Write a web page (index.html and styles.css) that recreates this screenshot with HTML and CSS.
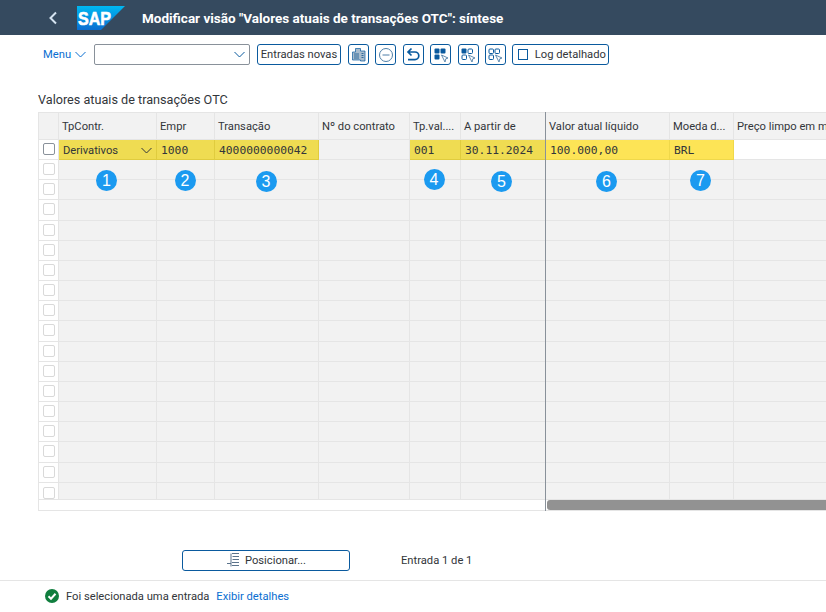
FILE: index.html
```html
<!DOCTYPE html>
<html lang="pt">
<head>
    <meta charset="UTF-8">
    <title>Modificar visão</title>
    <link rel="stylesheet" href="styles.css">
</head>
<body>

<header class="shell">
    <svg class="back" width="10" height="14" viewBox="0 0 10 14"><path d="M8 1.500 2.500 7 8 12.500" fill="none" stroke="#d5e3f0" stroke-width="2"/></svg>
    <svg class="logo" width="48" height="24" viewBox="0 0 48 24">
        <defs><linearGradient id="sapBlue" x1="0" y1="0" x2="0" y2="1"><stop offset="0" stop-color="#00b8f1"/><stop offset="1" stop-color="#0a6ed1"/></linearGradient></defs>
        <path d="M0 0H48L24 24H0Z" fill="url(#sapBlue)"/>
        <text x="1" y="18.500" class="logo-text" textLength="33" lengthAdjust="spacingAndGlyphs">SAP</text>
    </svg>
    <h1>Modificar visão "Valores atuais de transações OTC": síntese</h1>
</header>

<div class="toolbar">
    <span class="menu">Menu
        <svg width="11" height="7" viewBox="0 0 11 7"><path d="M.5 1 5.500 6l5-5" fill="none" stroke="#0a6ed1"/></svg>
    </span>
    <div class="combo">
        <svg width="11" height="7" viewBox="0 0 11 7"><path d="M.5 1 5.500 6l5-5" fill="none" stroke="#0a5a9e"/></svg>
    </div>
    <button class="btn">Entradas novas</button>
    <button class="btn icon first">
        <svg width="16" height="16" viewBox="0 0 16 16"><path d="M4.500 1.500h5V4h4.500v10H9.500v-1H1.500V5h3Z" fill="#a9bccd" stroke="#0a5a9e" stroke-width=".7"/><path d="M3 7h5M3 9h5M3 11h5M10.500 6.500h2M10.500 8.500h2M10.500 10.500h2" stroke="#2f6a9c"/></svg>
    </button>
    <button class="btn icon">
        <svg width="16" height="16" viewBox="0 0 16 16"><circle cx="8" cy="8" r="6.500" fill="none" stroke="#4f7fa8"/><path d="M4.500 8h7" stroke="#4f7fa8"/></svg>
    </button>
    <button class="btn icon">
        <svg width="16" height="16" viewBox="0 0 16 16"><path d="M6.500 1.500 3 5l3.500 3.500M3.500 5h6.500a3.800 3.800 0 0 1 0 7.600H3" fill="none" stroke="#0a5a9e" stroke-width="1.700"/></svg>
    </button>
    <button class="btn icon">
        <svg width="16" height="16" viewBox="0 0 16 16"><rect x="1.500" y="1.500" width="5" height="5" rx="1" fill="#0a5a9e"/><rect x="7.500" y="1.500" width="5" height="5" rx="1" fill="#0a5a9e"/><rect x="1.500" y="7.500" width="5" height="5" rx="1" fill="#0a5a9e"/><path d="M8.500 8 15 11l-2.200.8L12 15Z" fill="none" stroke="#4f7fa8" stroke-width=".9"/></svg>
    </button>
    <button class="btn icon">
        <svg width="16" height="16" viewBox="0 0 16 16"><rect x="1.500" y="1.500" width="5" height="5" rx="1" fill="#0a5a9e"/><rect x="8" y="2" width="4.500" height="4.500" rx="1" fill="none" stroke="#0a5a9e"/><rect x="2" y="8" width="4.500" height="4.500" rx="1" fill="none" stroke="#0a5a9e"/><path d="M8.500 8 15 11l-2.200.8L12 15Z" fill="none" stroke="#4f7fa8" stroke-width=".9"/></svg>
    </button>
    <button class="btn icon">
        <svg width="16" height="16" viewBox="0 0 16 16"><rect x="2" y="2" width="4.500" height="4.500" rx="1" fill="none" stroke="#0a5a9e"/><rect x="8" y="2" width="4.500" height="4.500" rx="1" fill="none" stroke="#0a5a9e"/><rect x="2" y="8" width="4.500" height="4.500" rx="1" fill="none" stroke="#0a5a9e"/><path d="M8.500 8 15 11l-2.200.8L12 15Z" fill="none" stroke="#4f7fa8" stroke-width=".9"/></svg>
    </button>
    <button class="btn log"><span class="log-box"></span>Log detalhado</button>
</div>

<h2 class="table-title">Valores atuais de transações OTC</h2>

<div class="table-wrap">
    <table class="grid">
        <colgroup>
            <col class="c-sel"><col class="c1"><col class="c2"><col class="c3"><col class="c4"><col class="c5"><col class="c6"><col class="c7"><col class="c8"><col class="c9">
        </colgroup>
        <thead>
            <tr>
                <th></th>
                <th>TpContr.</th>
                <th>Empr</th>
                <th>Transação</th>
                <th>Nº do contrato</th>
                <th>Tp.val....</th>
                <th>A partir de</th>
                <th>Valor atual líquido</th>
                <th>Moeda d...</th>
                <th>Preço limpo em m</th>
            </tr>
        </thead>
        <tbody id="rows">
            <tr>
                <td class="sel"><span class="check on"></span></td>
                <td class="key drop">Derivativos
                    <svg width="11" height="7" viewBox="0 0 11 7"><path d="M.5 1 5.500 6l5-5" fill="none" stroke="#32363a"/></svg>
                </td>
                <td class="key mono">1000</td>
                <td class="key mono">4000000000042</td>
                <td></td>
                <td class="key mono">001</td>
                <td class="key mono">30.11.2024</td>
                <td class="val mono">100.000,00</td>
                <td class="val mono">BRL</td>
                <td class="blank"></td>
            </tr>
        </tbody>
    </table>
    <div class="table-foot">
        <div class="thumb"></div>
    </div>
    <div class="fix-line"></div>
    <span class="pin p1">1</span>
    <span class="pin p2">2</span>
    <span class="pin p3">3</span>
    <span class="pin p4">4</span>
    <span class="pin p5">5</span>
    <span class="pin p6">6</span>
    <span class="pin p7">7</span>
</div>

<div class="pos-row">
    <button class="btn pos">
        <svg width="14" height="16" viewBox="0 0 14 16"><path d="M6 1.500h7M6.500 4.500h6.500M6.500 7.500h6.500M6 13.500h7M6 10.500h7M5 1.500V14.500M1 11.500h4" fill="none" stroke="#5b738b"/></svg>
        Posicionar...
    </button>
    <span class="count">Entrada 1 de 1</span>
</div>

<footer class="status">
    <svg width="14" height="14" viewBox="0 0 14 14"><circle cx="7" cy="7" r="7" fill="#107e3e"/><path d="M3.500 7.200 6 9.700 10.500 4.800" fill="none" stroke="#fff" stroke-width="2"/></svg>
    <span>Foi selecionada uma entrada</span>
    <a href="#">Exibir detalhes</a>
</footer>

<script>
    // empty grid rows under the one filled entry
    var rows = document.getElementById("rows");
    for (var i = 0; i < 17; i++) {
        var tr = document.createElement("tr");
        var html = '<td class="sel"><span class="check"></span></td>';
        for (var j = 0; j < 9; j++) {
            html += '<td></td>';
        }
        tr.innerHTML = html;
        rows.appendChild(tr);
    }
</script>

</body>
</html>
```

FILE: styles.css
```css
body {
    margin: 0;
    height: 612px;
    overflow: hidden;
    background: #fff;
    font-family: Roboto, Arial, sans-serif;
    font-size: 11.200px;
    color: #32363a;
}
.shell {
    height: 35px;
    background: #354a5f;
    display: flex;
    align-items: center;
    padding-left: 48px;
}
.back {
    margin-right: 19px;
}
.logo {
    margin-right: 17px;
}
.logo-text {
    font-family: "Liberation Sans", Arial, sans-serif;
    font-size: 19px;
    font-weight: 700;
    fill: #fff;
    stroke: #fff;
    stroke-width: .6;
}
.shell h1 {
    margin: 0;
    font-size: 13.500px;
    font-weight: 700;
    color: #fff;
}
.toolbar {
    height: 21px;
    margin-top: 9px;
    display: flex;
    align-items: center;
    padding-left: 43px;
}
.menu {
    color: #0a6ed1;
    width: 51px;
    display: flex;
    align-items: center;
    gap: 4px;
}
.combo {
    width: 156px;
    height: 21px;
    border: 1px solid #89919a;
    border-radius: 2px;
    display: flex;
    align-items: center;
    justify-content: flex-end;
    padding-right: 4px;
    margin-right: 7px;
    box-sizing: border-box;
}
.btn {
    height: 21px;
    padding: 0;
    border: 1px solid #0a5a9e;
    border-radius: 3px;
    background: #fff;
    color: #32363a;
    font-family: inherit;
    font-size: 11.200px;
    display: inline-flex;
    align-items: center;
    justify-content: center;
    box-sizing: border-box;
}
.toolbar .btn {
    width: 84px;
    flex: none;
}
.toolbar .icon {
    width: 21px;
    margin-right: 6.400px;
}
.toolbar .first {
    margin-left: 7px;
}
.toolbar .log {
    width: 97px;
    gap: 7px;
    padding-left: 2px;
}
.log-box {
    width: 10px;
    height: 11px;
    border: 1px solid #0a5a9e;
    box-sizing: border-box;
}
.table-title {
    margin: 26px 0 3px 38px;
    font-size: 12.650px;
    font-weight: 400;
    line-height: 18px;
}
.table-wrap {
    position: relative;
    margin-left: 38px;
    width: 788px;
    overflow: hidden;
}
.grid {
    border-collapse: collapse;
    table-layout: fixed;
    width: 788px;
}
.c-sel { width: 20px; }
.c1 { width: 98px; }
.c2 { width: 58px; }
.c3 { width: 104px; }
.c4 { width: 91px; }
.c5 { width: 51px; }
.c6 { width: 85px; }
.c7 { width: 124px; }
.c8 { width: 64px; }
.c9 { width: 93px; }
.grid th {
    height: 27px;
    padding: 0 0 0 3px;
    background: #f2f2f2;
    border: 1px solid #e5e5e5;
    font-weight: 400;
    text-align: left;
    white-space: nowrap;
    overflow: hidden;
    box-sizing: border-box;
}
.grid td {
    height: 20.170px;
    padding: 0;
    background: #f2f2f2;
    border: 1px solid #e5e5e5;
    box-sizing: border-box;
}
.grid tr:last-child td {
    height: 17px;
}
.grid .sel {
    background: #fff;
    vertical-align: top;
    padding-top: 3px;
}
.grid tr:last-child .sel {
    padding-top: 4px;
}
.check {
    display: block;
    width: 12px;
    height: 12px;
    margin: 0 auto;
    border: 1px solid #d9d9d9;
    border-radius: 2px;
    background: #fff;
    box-sizing: border-box;
}
.check.on {
    border-color: #89919a;
}
.grid .key {
    background: #efdc52;
    border-color: #e0cc3e;
    padding: 2px 0 0 4px;
}
.grid .val {
    background: #fde456;
    border-color: #efd84a;
    padding: 2px 0 0 4px;
}
.grid .blank {
    background: #fff;
}
.grid .drop {
    position: relative;
}
.drop svg {
    position: absolute;
    right: 4px;
    top: 7px;
}
.mono {
    font-family: "DejaVu Sans Mono", monospace;
    font-size: 11.300px;
}
.table-foot {
    height: 10px;
    padding-left: 508px;
    border-bottom: 1px solid #e5e5e5;
    border-left: 1px solid #e5e5e5;
}
.thumb {
    height: 10px;
    background: #929292;
    border-radius: 3px 0 0 3px;
}
.fix-line {
    position: absolute;
    left: 507px;
    top: 0;
    bottom: 0;
    width: 1px;
    background: #89919a;
}
.pin {
    position: absolute;
    width: 21px;
    height: 21px;
    border-radius: 50%;
    background: #1b9af0;
    color: #fff;
    font-family: "Liberation Sans", Arial, sans-serif;
    font-size: 16px;
    line-height: 21px;
    text-align: center;
}
.p1 { left: 58px; top: 58px; }
.p2 { left: 136.500px; top: 58px; }
.p3 { left: 217.500px; top: 59px; }
.p4 { left: 385.500px; top: 57px; }
.p5 { left: 453px; top: 59px; }
.p6 { left: 558px; top: 59px; }
.p7 { left: 652px; top: 58px; }
.pos-row {
    display: flex;
    align-items: center;
    height: 21px;
    margin-top: 39px;
    padding-left: 182px;
}
.btn.pos {
    width: 168px;
    gap: 5px;
}
.count {
    margin-left: 51px;
}
.status {
    margin-top: 9px;
    border-top: 1px solid #e5e5e5;
    height: 31px;
    display: flex;
    align-items: center;
    padding-left: 45px;
    gap: 7px;
}
.status a {
    color: #0a6ed1;
    text-decoration: none;
}
```
